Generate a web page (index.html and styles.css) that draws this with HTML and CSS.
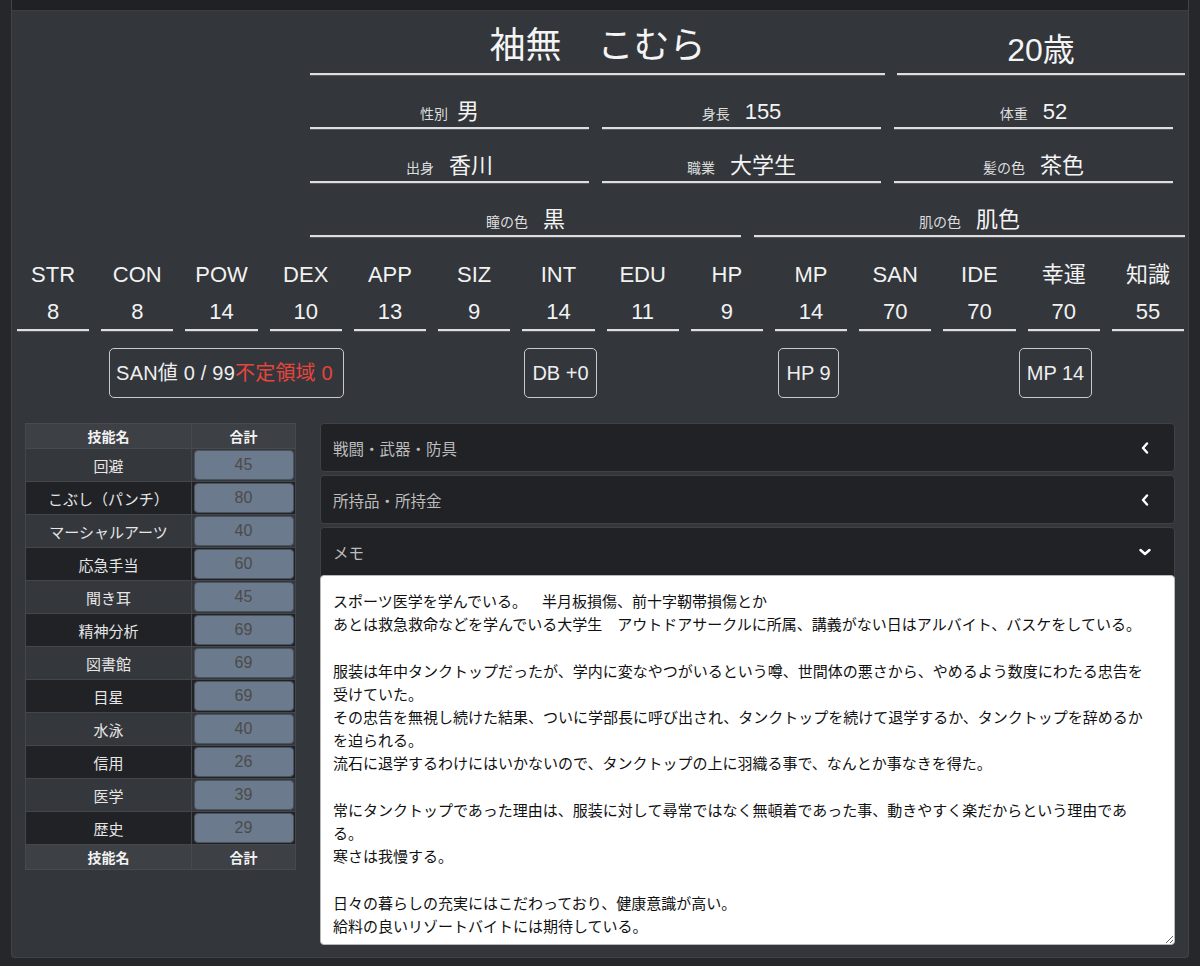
FILE: index.html
```html
<!DOCTYPE html>
<html lang="ja">
<head>
<meta charset="utf-8">
<title>キャラクターシート</title>
<link rel="stylesheet" href="styles.css">
</head>
<body>
<div class="sheet">
  <div class="sheet-top"></div>
  <div class="sheet-body">
    <section class="profile">
      <div class="row row-name">
        <div class="field field-name"><div class="f-inner"><span class="name">袖無　こむら</span></div></div>
        <div class="field field-name"><div class="f-inner"><span class="age">20歳</span></div></div>
      </div>
      <div class="row row-three">
        <div class="field"><div class="f-inner"><span class="f-label tight">性別</span><span class="f-value">男</span></div></div>
        <div class="field"><div class="f-inner"><span class="f-label">身長</span><span class="f-value">155</span></div></div>
        <div class="field"><div class="f-inner"><span class="f-label">体重</span><span class="f-value">52</span></div></div>
      </div>
      <div class="row row-three">
        <div class="field"><div class="f-inner"><span class="f-label">出身</span><span class="f-value">香川</span></div></div>
        <div class="field"><div class="f-inner"><span class="f-label">職業</span><span class="f-value">大学生</span></div></div>
        <div class="field"><div class="f-inner"><span class="f-label">髪の色</span><span class="f-value">茶色</span></div></div>
      </div>
      <div class="row row-two">
        <div class="field"><div class="f-inner"><span class="f-label">瞳の色</span><span class="f-value">黒</span></div></div>
        <div class="field"><div class="f-inner"><span class="f-label">肌の色</span><span class="f-value">肌色</span></div></div>
      </div>
    </section>

    <section class="stats">
      <div class="stat"><div class="stat-label">STR</div><div class="stat-value">8</div></div>
      <div class="stat"><div class="stat-label">CON</div><div class="stat-value">8</div></div>
      <div class="stat"><div class="stat-label">POW</div><div class="stat-value">14</div></div>
      <div class="stat"><div class="stat-label">DEX</div><div class="stat-value">10</div></div>
      <div class="stat"><div class="stat-label">APP</div><div class="stat-value">13</div></div>
      <div class="stat"><div class="stat-label">SIZ</div><div class="stat-value">9</div></div>
      <div class="stat"><div class="stat-label">INT</div><div class="stat-value">14</div></div>
      <div class="stat"><div class="stat-label">EDU</div><div class="stat-value">11</div></div>
      <div class="stat"><div class="stat-label">HP</div><div class="stat-value">9</div></div>
      <div class="stat"><div class="stat-label">MP</div><div class="stat-value">14</div></div>
      <div class="stat"><div class="stat-label">SAN</div><div class="stat-value">70</div></div>
      <div class="stat"><div class="stat-label">IDE</div><div class="stat-value">70</div></div>
      <div class="stat"><div class="stat-label">幸運</div><div class="stat-value">70</div></div>
      <div class="stat"><div class="stat-label">知識</div><div class="stat-value">55</div></div>
    </section>

    <section class="derived">
      <div class="dbtn dbtn-wide">SAN値 0 / 99<span class="warn">不定領域 0</span></div>
      <div class="dbtn">DB +0</div>
      <div class="dbtn">HP 9</div>
      <div class="dbtn">MP 14</div>
    </section>

    <section class="lower">
      <table class="skills">
        <colgroup><col class="c-name"><col class="c-total"></colgroup>
        <thead><tr><th>技能名</th><th>合計</th></tr></thead>
        <tbody>
          <tr><td>回避</td><td class="t"><input class="score" value="45" readonly></td></tr>
          <tr><td>こぶし（パンチ）</td><td class="t"><input class="score" value="80" readonly></td></tr>
          <tr><td>マーシャルアーツ</td><td class="t"><input class="score" value="40" readonly></td></tr>
          <tr><td>応急手当</td><td class="t"><input class="score" value="60" readonly></td></tr>
          <tr><td>聞き耳</td><td class="t"><input class="score" value="45" readonly></td></tr>
          <tr><td>精神分析</td><td class="t"><input class="score" value="69" readonly></td></tr>
          <tr><td>図書館</td><td class="t"><input class="score" value="69" readonly></td></tr>
          <tr><td>目星</td><td class="t"><input class="score" value="69" readonly></td></tr>
          <tr><td>水泳</td><td class="t"><input class="score" value="40" readonly></td></tr>
          <tr><td>信用</td><td class="t"><input class="score" value="26" readonly></td></tr>
          <tr><td>医学</td><td class="t"><input class="score" value="39" readonly></td></tr>
          <tr><td>歴史</td><td class="t"><input class="score" value="29" readonly></td></tr>
        </tbody>
        <tfoot><tr><th>技能名</th><th>合計</th></tr></tfoot>
      </table>

      <div class="accordion">
        <div class="acc-item">
          <div class="acc-head"><span>戦闘・武器・防具</span>
            <svg class="chev" width="8" height="12" viewBox="0 0 8 12"><polyline points="6,1.5 2,6 6,10.5" fill="none" stroke="#fff" stroke-width="2.4" stroke-linecap="round" stroke-linejoin="round"/></svg>
          </div>
        </div>
        <div class="acc-item">
          <div class="acc-head"><span>所持品・所持金</span>
            <svg class="chev" width="8" height="12" viewBox="0 0 8 12"><polyline points="6,1.5 2,6 6,10.5" fill="none" stroke="#fff" stroke-width="2.4" stroke-linecap="round" stroke-linejoin="round"/></svg>
          </div>
        </div>
        <div class="acc-item open">
          <div class="acc-head"><span>メモ</span>
            <svg class="chev-down" width="12" height="8" viewBox="0 0 12 8"><polyline points="1.5,2 6,6 10.5,2" fill="none" stroke="#fff" stroke-width="2.4" stroke-linecap="round" stroke-linejoin="round"/></svg>
          </div>
          <textarea class="memo">スポーツ医学を学んでいる。　半月板損傷、前十字靭帯損傷とか
あとは救急救命などを学んでいる大学生　アウトドアサークルに所属、講義がない日はアルバイト、バスケをしている。

服装は年中タンクトップだったが、学内に変なやつがいるという噂、世間体の悪さから、やめるよう数度にわたる忠告を受けていた。
その忠告を無視し続けた結果、ついに学部長に呼び出され、タンクトップを続けて退学するか、タンクトップを辞めるかを迫られる。
流石に退学するわけにはいかないので、タンクトップの上に羽織る事で、なんとか事なきを得た。

常にタンクトップであった理由は、服装に対して尋常ではなく無頓着であった事、動きやすく楽だからという理由である。
寒さは我慢する。

日々の暮らしの充実にはこだわっており、健康意識が高い。
給料の良いリゾートバイトには期待している。</textarea>
        </div>
      </div>
    </section>
  </div>
</div>
</body>
</html>
```

FILE: styles.css
```css
* { box-sizing: border-box; }

body {
  margin: 0;
  background: #25272b;
  font-family: "Liberation Sans", "Noto Sans CJK JP", sans-serif;
  color: #eeeeee;
}

.sheet {
  margin-left: 11px;
  width: 1178px;
  background: #33363b;
  border: 1px solid #404348;
  border-top: 0;
  border-radius: 0 0 4px 4px;
}

.sheet-top {
  height: 11px;
  background: #202124;
  border-bottom: 1px solid #3a3d41;
}

.sheet-body {
  padding: 0 4px 12px 5px;
}

/* profile */
.profile {
  margin-left: 293px;
  width: 875px;
}

.row { display: grid; }
.row-name { grid-template-columns: 575px 288px; column-gap: 12px; }
.row-three { grid-template-columns: repeat(3, 279px); column-gap: 13px; }
.row-two { grid-template-columns: 431px 431px; column-gap: 13px; }

.field {
  height: 54px;
  display: flex;
  align-items: flex-end;
  justify-content: center;
  padding-bottom: 0;
  border-bottom: 2px solid #dedede;
  box-shadow: 0 1px 0 #55585d;
}

.field-name {
  height: 64px;
  padding-bottom: 0;
}

.f-inner {
  line-height: 26px;
  white-space: nowrap;
}

.field-name .f-inner { line-height: 40px; }

.name { font-size: 36px; color: #f4f4f4; }
.age { font-size: 32px; color: #f4f4f4; position: relative; top: 3px; }

.f-label {
  font-size: 14px;
  color: #dddddd;
  margin-right: 15px;
}
.f-label.tight { margin-right: 9px; }

.f-value {
  font-size: 22px;
  color: #f4f4f4;
}

/* stats */
.stats {
  display: grid;
  grid-template-columns: repeat(14, 1fr);
  column-gap: 12px;
  margin-top: 23px;
}

.stat {
  text-align: center;
  padding-bottom: 2px;
  border-bottom: 2px solid #dedede;
  box-shadow: 0 1px 0 #55585d;
}

.stat-label,
.stat-value {
  font-size: 22px;
  line-height: 30px;
  color: #f2f2f2;
}

.stat-value { margin-top: 7px; }

/* derived */
.derived {
  display: grid;
  grid-template-columns: 419px 249px 247px 247px;
  justify-items: center;
  margin-top: 17px;
}

.dbtn {
  height: 50px;
  border: 1px solid #cacaca;
  border-radius: 5px;
  padding: 0 7px;
  font-size: 20px;
  line-height: 48px;
  color: #eeeeee;
  white-space: nowrap;
}

.dbtn-wide { padding: 0 10px 0 6px; letter-spacing: 0.2px; }

.warn { color: #e5453b; }

/* lower */
.lower {
  display: grid;
  grid-template-columns: 270px 1fr;
  column-gap: 25px;
  align-items: start;
  padding: 0 9px 0 8px;
  margin-top: 25px;
}

.skills {
  width: 270px;
  border-collapse: collapse;
  table-layout: fixed;
}

.c-name { width: 166px; }
.c-total { width: 104px; }

.skills th {
  height: 25px;
  padding: 0;
  background: #3d4045;
  color: #f2f2f2;
  font-size: 14px;
  font-weight: bold;
  border: 1px solid #474a4f;
}

.skills td {
  height: 33px;
  padding: 0;
  text-align: center;
  font-size: 15px;
  color: #e6e6e6;
  border: 1px solid #43464b;
}

.skills tbody tr:nth-child(odd) td { background: #34373c; }
.skills tbody tr:nth-child(even) td { background: #202226; }

.score {
  display: block;
  width: 100px;
  height: 30px;
  margin: 0 auto;
  padding: 0;
  background: #6b7a8c;
  border: 1px solid #4a525c;
  border-radius: 4px;
  color: #4b4b4b;
  font-family: "Liberation Sans", sans-serif;
  font-size: 16px;
  text-align: center;
}

/* accordion */
.acc-item {
  background: #202226;
  border: 1px solid #3e4146;
  border-radius: 4px;
  margin-bottom: 3px;
}

.acc-item.open { margin-bottom: 0; }

.acc-head {
  height: 47px;
  display: flex;
  align-items: center;
  justify-content: space-between;
  padding: 0 24px 0 12px;
  font-size: 15.5px;
  color: #bdbdbd;
}

.chev { margin-right: 1px; }
.chev-down { margin-right: -1px; }

.memo {
  display: block;
  width: calc(100% + 2px);
  height: 370px;
  margin: 0 -1px -1px -1px;
  padding: 13px 26px 3px 12px;
  background: #ffffff;
  border: 1px solid #b9b9b9;
  border-radius: 4px;
  color: #111111;
  font-family: "Noto Sans CJK JP", sans-serif;
  font-size: 15px;
  line-height: 23.2px;
  text-spacing-trim: space-all;
  resize: vertical;
  overflow: hidden;
  outline: none;
}
```
